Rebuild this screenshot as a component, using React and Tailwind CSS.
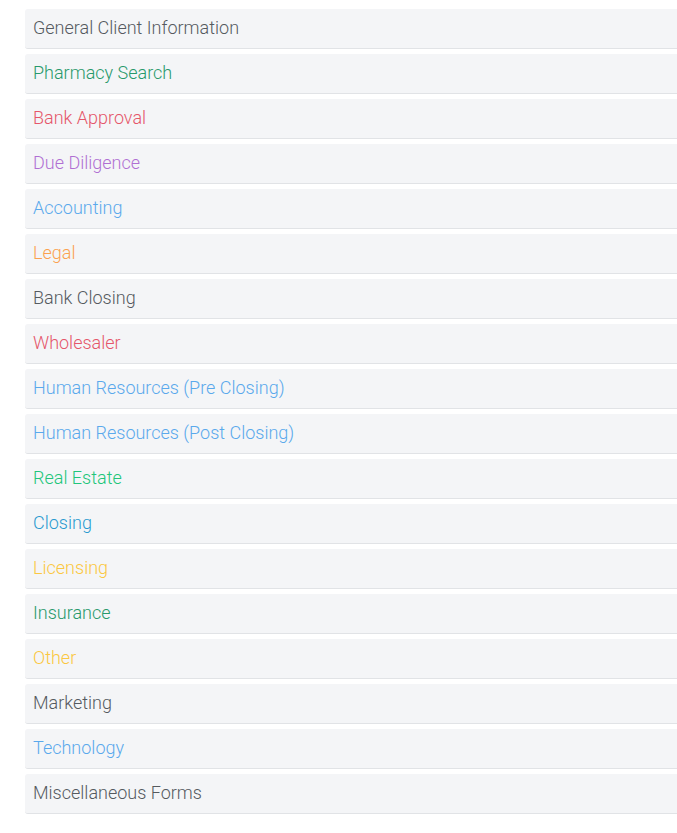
export default function App() {
  const sections = [
    { label: "General Client Information", color: "text-[#555a5f]" },
    { label: "Pharmacy Search", color: "text-[#28996b]" },
    { label: "Bank Approval", color: "text-[#e5566a]" },
    { label: "Due Diligence", color: "text-[#b06fd3]" },
    { label: "Accounting", color: "text-[#5aa9ec]" },
    { label: "Legal", color: "text-[#fba14e]" },
    { label: "Bank Closing", color: "text-[#555a5f]" },
    { label: "Wholesaler", color: "text-[#e5566a]" },
    { label: "Human Resources (Pre Closing)", color: "text-[#5aa9ec]" },
    { label: "Human Resources (Post Closing)", color: "text-[#5aa9ec]" },
    { label: "Real Estate", color: "text-[#21c57a]" },
    { label: "Closing", color: "text-[#2a9ad0]" },
    { label: "Licensing", color: "text-[#fbc740]" },
    { label: "Insurance", color: "text-[#28996b]" },
    { label: "Other", color: "text-[#fbc740]" },
    { label: "Marketing", color: "text-[#555a5f]" },
    { label: "Technology", color: "text-[#5aa9ec]" },
    { label: "Miscellaneous Forms", color: "text-[#555a5f]" },
  ];

  return (
    <div
      className="min-h-screen bg-white pt-[9px] pl-[25px]"
      style={{ fontFamily: "Roboto, 'Noto Sans', sans-serif" }}
    >
      {/* Section list */}
      <div className="flex flex-col gap-[5px]">
        {sections.map((s) => (
          <div
            key={s.label}
            className="h-[40px] flex items-center pl-[8px] pb-[2px] bg-[#f4f5f7] border-b border-[#e1e3e6] rounded-l-[3px]"
          >
            <span className={`text-[18px] font-light leading-none ${s.color}`}>
              {s.label}
            </span>
          </div>
        ))}
      </div>
    </div>
  );
}
